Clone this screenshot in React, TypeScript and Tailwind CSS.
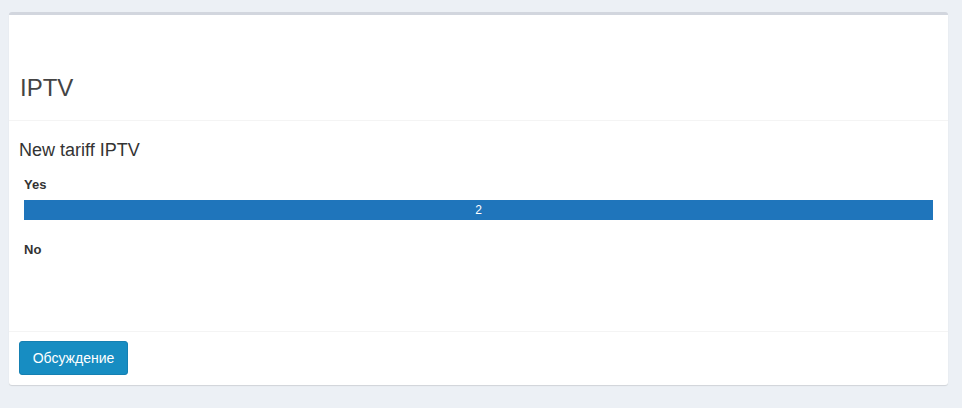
export default function App() {
  return (
    <div
      className="h-[408px] w-[962px] bg-[#ecf0f5] pt-[12px] pl-[9px] pr-[14px]"
      style={{ fontFamily: '"Liberation Sans", Arial, sans-serif' }}
    >
      <div className="rounded-[3px] border-t-[3px] border-[#d2d6de] bg-white shadow-[0_1px_1px_rgba(0,0,0,0.12)]">
        <div className="flex h-[106px] flex-col justify-end border-b border-[#f4f4f4] px-[11px] pb-[19px]">
          <h3 className="text-[24px] leading-[1.1] text-[#444]">IPTV</h3>
        </div>
        <div className="h-[210px] px-[10px] pt-[20px]">
          <h4 className="text-[18px] leading-[1.1] text-[#333]">New tariff IPTV</h4>
          <div className="pl-[5px] pr-[5px]">
            <div className="mt-[14px] text-[13px] font-bold leading-[20px] text-[#333]">Yes</div>
            <div className="mt-[5px] flex h-[20px] items-center justify-center bg-[#1f75bb] text-[12px] text-white">
              2
            </div>
            <div className="mt-[20.5px] text-[13px] font-bold leading-[20px] text-[#333]">No</div>
          </div>
        </div>
        <div className="border-t border-[#f4f4f4] px-[10px] pt-[9px] pb-[10px]">
          <button className="h-[34px] w-[109px] rounded-[3px] border border-[#1580b2] bg-[#178dc2] text-[14px] text-white">
            Обсуждение
          </button>
        </div>
      </div>
    </div>
  );
}
